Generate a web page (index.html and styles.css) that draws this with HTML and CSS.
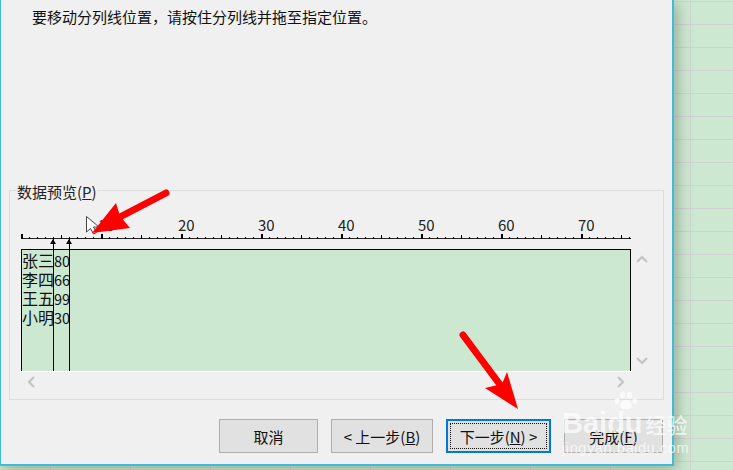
FILE: index.html
```html
<!doctype html>
<html lang="zh-CN">
<head>
<meta charset="UTF-8">
<title>文本分列向导</title>
<link rel="stylesheet" href="styles.css">
</head>
<body>
	<div class="dialog">
		<p class="hint">要移动分列线位置，请按住分列线并拖至指定位置。</p>
		<div class="group">
			<div class="legend">数据预览(<u>P</u>)</div>
			<div class="ruler">
				<div class="ruler-nums">
					<span>10</span><span>20</span><span>30</span><span>40</span><span>50</span><span>60</span><span>70</span>
				</div>
				<div class="ruler-ticks"></div>
			</div>
			<div class="preview-row">
				<div class="preview">
					<div class="col-name">张三<br>李四<br>王五<br>小明</div>
					<div class="col-score">80<br>66<br>99<br>30</div>
					<!-- 分列线 -->
					<i class="split split-a"></i>
					<i class="split split-b"></i>
				</div>
				<div class="vscroll">
					<svg width="12" height="8" viewBox="0 0 12 8"><path class="chev" d="M1 7 6 2l5 5"/></svg>
					<svg width="12" height="8" viewBox="0 0 12 8"><path class="chev" d="M1 1l5 5 5-5"/></svg>
				</div>
			</div>
			<div class="hscroll">
				<svg width="8" height="12" viewBox="0 0 8 12"><path class="chev" d="M7 1 2 6l5 5"/></svg>
				<svg width="8" height="12" viewBox="0 0 8 12"><path class="chev" d="M1 1l5 5-5 5"/></svg>
			</div>
		</div>
		<div class="buttons">
			<button class="btn btn-cancel">取消</button>
			<button class="btn btn-back">&lt; 上一步(<u>B</u>)</button>
			<button class="btn btn-next">下一步(<u>N</u>) &gt;</button>
			<button class="btn btn-finish">完成(<u>F</u>)</button>
		</div>
	</div>

	<!-- 标注箭头和鼠标 -->
	<svg class="marks" width="733" height="470" viewBox="0 0 733 470">
		<path d="M86.500 216.500V232l4-3.500 3 5.500 3-1.500-3-5.500h5.500z" fill="#fff" stroke="#444" stroke-width="1"/>
		<path d="M166 193 118 218" stroke="#f00" stroke-width="7" stroke-linecap="round" fill="none"/>
		<path d="M92 233 116 203 120 216 130 228z" fill="#f00"/>
		<path d="M463 335 501 386" stroke="#f00" stroke-width="7" stroke-linecap="round" fill="none"/>
		<path d="M518 409 507 372 502 384 485 388z" fill="#f00"/>
	</svg>

	<!-- 水印 -->
	<div class="watermark">
		<svg class="paw" width="40" height="20" viewBox="0 0 40 34">
			<ellipse cx="5" cy="17" rx="4" ry="5"/>
			<ellipse cx="14" cy="7" rx="4.500" ry="6"/>
			<ellipse cx="26" cy="7" rx="4.500" ry="6"/>
			<ellipse cx="35" cy="17" rx="4" ry="5"/>
			<path d="M20 15c-6 0-10 6-10 11 0 4 4 5 10 5s10-1 10-5c0-5-4-11-10-11z"/>
		</svg>
		<div class="wm-logo">Baidu<span class="wm-cn">经验</span></div>
		<div class="wm-url">jingyan.baidu.com</div>
	</div>
</body>
</html>
```
FILE: styles.css
```css
* {margin:0;padding:0;box-sizing:border-box;}
body{
	width:733px;height:470px;overflow:hidden;position:relative;
	font-family:"Noto Sans CJK SC","Noto Sans",sans-serif;font-size:15px;color:#111;
	background-color:#cde8d0;
	background-image:
		repeating-linear-gradient(90deg,transparent 0 50px,#d2d2d2 50px 51px,transparent 51px 80px),
		repeating-linear-gradient(180deg,transparent 0 1px,#d2d2d2 1px 2px,transparent 2px 23px);
}
u{text-decoration:underline;text-underline-offset:1px;}

.dialog{
	width:674px;height:466px;background:#f0f0f0;
	border:solid #3dbdd6;border-width:0 2px 2px 1px;
	box-shadow:3px 3px 14px rgba(0,0,0,.28);
}
.hint{height:190px;padding:6px 0 0 31px;line-height:22px;}

.group{margin:0 8px;height:210px;border:1px solid #dcdcdc;}
.legend{
	width:max-content;height:20px;margin:-9px 0 0 7px;
	line-height:20px;background:#f0f0f0;color:#222;
}
.ruler{height:47px;padding:13px 0 0 11px;}
.ruler-nums{display:flex;height:19px;padding-left:77px;line-height:19px;font-size:15px;color:#222;}
.ruler-nums span{flex:0 0 80px;}
.ruler-ticks{
	width:610px;height:6px;
	background:
		repeating-linear-gradient(90deg,#000 0 2px,transparent 2px 80px) 0 0/100% 5px no-repeat,
		repeating-linear-gradient(90deg,#000 0 1px,transparent 1px 40px) 0 1px/100% 4px no-repeat,
		repeating-linear-gradient(90deg,#000 0 1px,transparent 1px 8px) 0 3px/100% 2px no-repeat,
		linear-gradient(#222,#222) 0 4px/100% 1px no-repeat;
}

.preview-row{display:flex;padding-left:11px;}
.preview{
	width:610px;height:122px;position:relative;display:flex;
	background:#cde8d0;border:solid #000;border-width:1px 1px 0 1px;
	line-height:19px;padding-top:1px;color:#111;
}
.col-name{width:31px;font-size:16px;white-space:nowrap;}
.col-score{padding-left:1px;font-size:14.500px;}
.split{position:absolute;top:-11px;bottom:0;width:1px;background:#000;}
.split::before{
	content:"";position:absolute;top:0;left:-3px;
	border:solid transparent;border-width:0 3.500px 5px;border-bottom-color:#000;
}
.split-a{left:31px;}
.split-b{left:47px;}

.vscroll{
	width:22px;height:122px;padding:6px 0 6px 5px;
	display:flex;flex-direction:column;justify-content:space-between;
}
.hscroll{
	width:610px;height:21px;margin-left:11px;padding:0 6px;border-top:1px solid #fff;
	display:flex;align-items:center;justify-content:space-between;
}
.chev{fill:none;stroke:#c2c2c2;stroke-width:2;}

.buttons{display:flex;justify-content:flex-end;gap:13px;padding:19px 9px 0 0;}
.btn{
	height:34px;background:#e1e1e1;border:1px solid #adadad;
	font:inherit;color:#111;position:relative;
}
.btn-cancel,.btn-finish{width:99px;}
.btn-back{width:102px;}
.btn-next{width:105px;border:2px solid #0078d7;}
.btn-next::after{content:"";position:absolute;inset:2px;border:1px dotted #111;}

.marks{position:absolute;left:0;top:0;}

.watermark{position:absolute;left:562px;top:391px;width:140px;color:rgba(255,255,255,.72);font-family:"Liberation Sans",sans-serif;}
.paw{display:block;margin-left:44px;fill:rgba(255,255,255,.72);}
.wm-logo{font-size:29px;font-weight:bold;line-height:24px;white-space:nowrap;}
.wm-cn{font-family:"Noto Sans CJK SC",sans-serif;font-size:21px;font-weight:500;margin-left:3px;line-height:1;}
.wm-url{font-size:14.500px;line-height:16px;margin-top:5px;letter-spacing:.6px;white-space:nowrap;}
```
